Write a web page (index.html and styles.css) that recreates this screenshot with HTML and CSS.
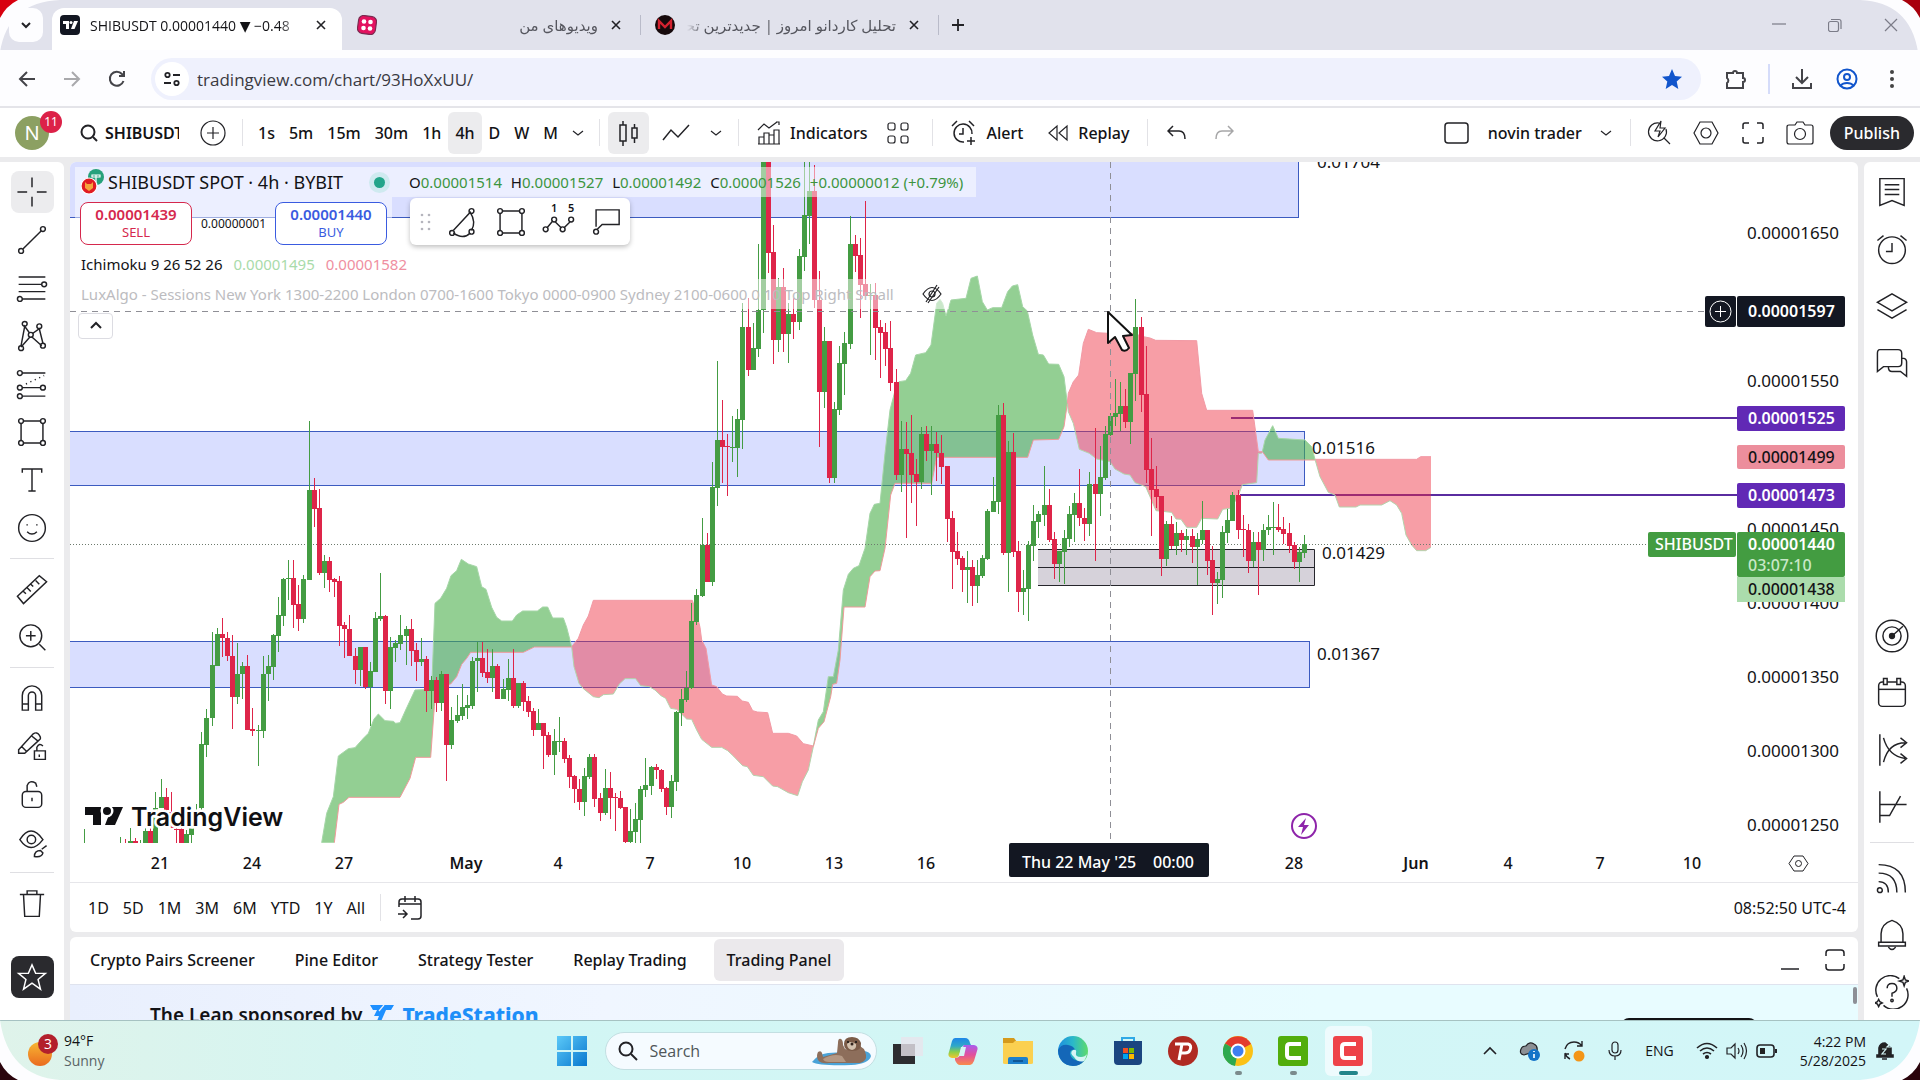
FILE: index.html
```html
<!DOCTYPE html>
<html lang="en">
<head>
  <meta charset="UTF-8">
  <meta name="viewport" content="width=device-width, initial-scale=1.0">
  <title>SHIBUSDT 0.00001440</title>
  <link rel="stylesheet" href="styles.css">
</head>
<body>
  <!-- Browser tabs -->
  <header class="tabstrip">
    <button class="tab-search" aria-label="Search tabs"><svg width="12" height="12" viewBox="0 0 12 12"><path d="M2 4l4 4 4-4" stroke-width="2"/></svg></button>
    <div class="tab tab-active">
      <svg class="favicon" width="20" height="20" viewBox="0 0 20 20"><rect width="20" height="20" rx="4" fill="#131722" stroke="none"/><path d="M3 6h6v8H6V9H3z" fill="#fff" stroke="none"/><circle cx="11" cy="7.500" r="1.500" fill="#fff" stroke="none"/><path d="M14 6h4l-3.500 8H11z" fill="#fff" stroke="none"/></svg>
      <span class="tab-title">SHIBUSDT 0.00001440 ▼ −0.48</span>
      <button class="tab-close" aria-label="Close tab"><svg width="12" height="12" viewBox="0 0 12 12"><path d="M2 2l8 8M10 2l-8 8" stroke-width="1.600"/></svg></button>
    </div>
    <div class="tab">
      <svg class="favicon" width="20" height="20" viewBox="0 0 20 20"><rect x="1" y="1" width="18" height="18" rx="5" fill="#e3125f" stroke="#7a2a50" transform="rotate(8 10 10)"/><g fill="#fff" stroke="none"><circle cx="7" cy="6.500" r="2.300"/><circle cx="13.500" cy="7" r="2.300"/><circle cx="6.500" cy="13" r="2.300"/><circle cx="13" cy="13.500" r="2.300"/></g></svg>
      <span class="tab-title rtl" dir="rtl" lang="fa">ویدیوهای من</span>
      <button class="tab-close" aria-label="Close tab"><svg width="12" height="12" viewBox="0 0 12 12"><path d="M2 2l8 8M10 2l-8 8" stroke-width="1.600"/></svg></button>
    </div>
    <div class="tab tab-line">
      <svg class="favicon" width="20" height="20" viewBox="0 0 20 20"><circle cx="10" cy="10" r="10" fill="#160a0c" stroke="none"/><path d="M4 14V6l6 6 6-6v8" stroke="#d3222f" stroke-width="2.400"/></svg>
      <span class="tab-title rtl" dir="rtl" lang="fa">تحلیل کاردانو امروز | جدیدترین تحلیل</span>
      <button class="tab-close" aria-label="Close tab"><svg width="12" height="12" viewBox="0 0 12 12"><path d="M2 2l8 8M10 2l-8 8" stroke-width="1.600"/></svg></button>
    </div>
    <button class="tab-new tab-line" aria-label="New tab"><svg width="16" height="16" viewBox="0 0 16 16"><path d="M8 2v12M2 8h12" stroke-width="1.800"/></svg></button>
    <div class="window-buttons">
      <button aria-label="Minimize"><svg width="14" height="14" viewBox="0 0 14 14"><path d="M0 6h14"/></svg></button>
      <button aria-label="Restore"><svg width="14" height="14" viewBox="0 0 14 14"><rect x=".500" y="3.500" width="10" height="10" rx="2"/><path d="M3 1.500h8a2 2 0 0 1 2 2V11"/></svg></button>
      <button aria-label="Close window"><svg width="14" height="14" viewBox="0 0 14 14"><path d="M1 1l12 12M13 1L1 13"/></svg></button>
    </div>
  </header>

  <div class="addressbar">
    <button class="nav-btn" aria-label="Back"><svg width="18" height="18" viewBox="0 0 18 18"><path d="M17 9H2M9 2L2 9l7 7" stroke-width="2"/></svg></button>
    <button class="nav-btn nav-off" aria-label="Forward"><svg width="18" height="18" viewBox="0 0 18 18"><path d="M1 9h15M9 2l7 7-7 7" stroke-width="2"/></svg></button>
    <button class="nav-btn" aria-label="Reload"><svg width="18" height="18" viewBox="0 0 18 18"><path d="M15.500 11A7 7 0 1 1 14 4l2 2M16 1v5h-5" stroke-width="2"/></svg></button>
    <div class="urlbox">
      <span class="site-info"><svg width="18" height="18" viewBox="0 0 18 18"><circle cx="4.500" cy="5" r="2.200" stroke-width="1.800"/><path d="M10 5h7M1 13h7" stroke-width="1.800"/><circle cx="13.500" cy="13" r="2.200" stroke-width="1.800"/></svg></span>
      <input type="text" aria-label="Address" value="tradingview.com/chart/93HoXxUU/">
      <svg width="22" height="22" viewBox="0 0 22 22"><path d="M11 1l3 7 7 .700-5.300 4.800L17.300 21 11 17l-6.300 4 1.600-7.500L1 8.700 8 8z" fill="#1155cc" stroke="none"/></svg>
    </div>
    <div class="browser-tools">
      <button aria-label="Extensions"><svg width="22" height="22" viewBox="0 0 22 22"><path d="M2 5h6a2 2 0 0 1 4 0h6v5a2 2 0 0 1 0 4v6H2v-5a3 3 0 0 0 0-5z" stroke-width="2"/></svg></button>
      <i class="tool-line"></i>
      <button aria-label="Downloads"><svg width="22" height="22" viewBox="0 0 22 22"><path d="M11 1v13M5 9l6 6 6-6M2 15v5h18v-5" stroke-width="2"/></svg></button>
      <button class="profile" aria-label="Profile"><svg width="22" height="22" viewBox="0 0 22 22"><circle cx="11" cy="11" r="9.500" stroke-width="2"/><circle cx="11" cy="9" r="3" stroke-width="2"/><path d="M4.500 17.500c3-3.500 10-3.500 13 0" stroke-width="2"/></svg></button>
      <button aria-label="Menu"><svg width="22" height="22" viewBox="0 0 22 22"><g fill="#444" stroke="none"><circle cx="11" cy="4" r="2"/><circle cx="11" cy="11" r="2"/><circle cx="11" cy="18" r="2"/></g></svg></button>
    </div>
  </div>

  <!-- Chart header -->
  <div class="topbar">
    <button class="avatar" aria-label="Account">N<span class="badge">11</span></button>
    <button class="symbol"><svg width="18" height="18" viewBox="0 0 18 18"><circle cx="8" cy="8" r="6.500" stroke-width="2"/><path d="M13 13l4 4" stroke-width="2"/></svg><b>SHIBUSDT</b></button>
    <button class="icon-btn" aria-label="Compare"><svg width="26" height="26" viewBox="0 0 26 26"><circle cx="13" cy="13" r="12"/><path d="M13 7v12M7 13h12"/></svg></button>
    <i class="sep"></i>
    <div class="intervals">
      <button>1s</button><button>5m</button><button>15m</button><button>30m</button><button>1h</button><button class="on">4h</button><button>D</button><button>W</button><button>M</button>
      <button aria-label="More intervals"><svg width="12" height="12" viewBox="0 0 12 12"><path d="M1 4l5 4 5-4"/></svg></button>
    </div>
    <i class="sep"></i>
    <button class="icon-btn on" aria-label="Candles"><svg width="26" height="28" viewBox="0 0 26 28"><path d="M4 6h6v16H4zM7 2v4M7 22v5M16 9h5v10h-5zM18.500 5v4M18.500 19v5" stroke-width="1.500"/></svg></button>
    <button class="icon-btn" aria-label="Line"><svg width="28" height="20" viewBox="0 0 28 20"><path d="M1 17L9 7l7 7L27 2" stroke-width="1.500"/></svg></button>
    <button class="chev" aria-label="Chart types"><svg width="12" height="12" viewBox="0 0 12 12"><path d="M1 4l5 4 5-4"/></svg></button>
    <i class="sep"></i>
    <button class="text-btn"><svg width="24" height="24" viewBox="0 0 24 24"><path d="M1 9l6-6 5 4 8-6M19 1h3v3M2 23v-7h5v7M7 23V12h5v11M12 23v-9h5v9M17 23V9h5v14M1 23h22"/></svg>Indicators</button>
    <button class="icon-btn" aria-label="Templates"><svg width="22" height="22" viewBox="0 0 22 22"><rect x="1" y="1" width="7" height="7" rx="2"/><rect x="14" y="1" width="7" height="7" rx="2"/><rect x="1" y="14" width="7" height="7" rx="2"/><rect x="14" y="14" width="7" height="7" rx="2"/></svg></button>
    <i class="sep"></i>
    <button class="text-btn"><svg width="26" height="26" viewBox="0 0 26 26"><path d="M21 14a9 9 0 1 0-8 8M12 8v6H8M1 6l5-5M18 1l5 5M20 17v8M16 21h8" stroke-width="1.500"/></svg>Alert</button>
    <button class="text-btn"><svg width="22" height="20" viewBox="0 0 22 20"><path d="M10 3v14l-8-7zM20 3v14l-8-7z"/></svg>Replay</button>
    <i class="sep"></i>
    <button class="icon-btn" aria-label="Undo"><svg width="20" height="18" viewBox="0 0 20 18"><path d="M6 2L1 7l5 5M1 7h11q6 0 6 8" stroke-width="1.500"/></svg></button>
    <button class="icon-btn off" aria-label="Redo"><svg width="20" height="18" viewBox="0 0 20 18"><path d="M14 2l5 5-5 5M19 7H8Q2 7 2 15" stroke-width="1.500"/></svg></button>
    <span class="grow"></span>
    <button class="text-btn layout-btn"><svg width="26" height="24" viewBox="0 0 26 24"><rect x="1" y="2" width="23" height="20" rx="3" stroke-width="1.500"/></svg>novin trader<svg width="12" height="12" viewBox="0 0 12 12"><path d="M1 4l5 4 5-4"/></svg></button>
    <i class="sep"></i>
    <button class="icon-btn" aria-label="Quick search"><svg width="26" height="26" viewBox="0 0 26 26"><path d="M13 3a9 9 0 1 0 7 6M18 18l6 6M15 1l-6 10h5l-2 6 7-9h-5z"/></svg></button>
    <button class="icon-btn" aria-label="Settings"><svg width="26" height="26" viewBox="0 0 26 26"><path d="M7 2h12l6 11-6 11H7L1 13z"/><circle cx="13" cy="13" r="5"/></svg></button>
    <button class="icon-btn" aria-label="Fullscreen"><svg width="26" height="26" viewBox="0 0 26 26"><path d="M3 9V5q0-2 2-2h4M17 3h4q2 0 2 2v4M23 17v4q0 2-2 2h-4M9 23H5q-2 0-2-2v-4" stroke-width="1.500"/></svg></button>
    <button class="icon-btn" aria-label="Snapshot"><svg width="28" height="26" viewBox="0 0 28 26"><path d="M3 5h6l2-3h6l2 3h6q2 0 2 2v15q0 2-2 2H3q-2 0-2-2V7q0-2 2-2z"/><circle cx="14" cy="14" r="5.500"/></svg></button>
    <button class="publish">Publish</button>
  </div>

  <div class="workspace">
    <!-- Drawing tools -->
    <nav class="toolbar-left">
      <button class="on" aria-label="Cross"><svg viewBox="0 0 28 28"><path d="M14 2v8M14 18v8M2 14h8M18 14h8"/></svg></button>
      <button aria-label="Trend line"><svg viewBox="0 0 28 28"><path d="M6.500 21.500l15-15"/><circle cx="5" cy="23" r="2"/><circle cx="23" cy="5" r="2"/></svg></button>
      <button aria-label="Fib"><svg viewBox="0 0 28 28"><path d="M3 5h22M3 11h19M3 17h22M6 23h19"/><circle cx="24" cy="11" r="2"/><circle cx="4" cy="23" r="2"/></svg></button>
      <button aria-label="Patterns"><svg viewBox="0 0 28 28"><path d="M5 22L8 6l5 7 7-5 3 12M5 23l8-9 9 8"/><circle cx="5" cy="24" r="2"/><circle cx="8" cy="4" r="2"/><circle cx="13" cy="13" r="2" fill="#fff"/><circle cx="20" cy="6" r="2"/><circle cx="23" cy="22" r="2"/></svg></button>
      <button aria-label="Forecasting"><svg viewBox="0 0 28 28"><path d="M6 5h19M6 17h15M6 24h19"/><path d="M9 14L24 7" stroke-dasharray="1 3"/><circle cx="4" cy="5" r="2"/><circle cx="4" cy="17" r="2"/><circle cx="4" cy="24" r="2"/><circle cx="23" cy="17" r="2"/></svg></button>
      <button aria-label="Shapes"><svg viewBox="0 0 28 28"><path d="M7 5h14M7 23h14M5 7v14M23 7v14"/><circle cx="5" cy="5" r="2"/><circle cx="23" cy="5" r="2"/><circle cx="5" cy="23" r="2"/><circle cx="23" cy="23" r="2"/></svg></button>
      <button aria-label="Text"><svg viewBox="0 0 28 28"><path d="M6 8V5h16v3M14 5v18M11 23h6"/></svg></button>
      <button aria-label="Icons"><svg viewBox="0 0 28 28"><circle cx="14" cy="14" r="11"/><path d="M10 17q4 4 8 0M10 11v1M18 11v1"/></svg></button>
      <hr>
      <button aria-label="Measure"><svg viewBox="0 0 28 28"><path d="M2 20L20 3l6 5L7 26zM7 16l2 2M10 13l3 3M13 10l2 2M17 7l3 3"/></svg></button>
      <button aria-label="Zoom in"><svg viewBox="0 0 28 28"><circle cx="13" cy="13" r="9"/><path d="M20 20l5 5M13 9v8M9 13h8"/></svg></button>
      <hr>
      <button aria-label="Magnet"><svg viewBox="0 0 28 28"><path d="M6 24V12a8 8 0 0 1 16 0v12h-5V12a3 3 0 0 0-6 0v12zM6 19h5M17 19h5"/></svg></button>
      <button aria-label="Stay in drawing mode"><svg viewBox="0 0 28 28"><path d="M3 17L15 4q3-2 5 1t0 4L8 20H3zM5 14l5 5M14 6l5 4M16 18h9v7h-9zM18 18v-3q2-4 5-1M20 21v2"/></svg></button>
      <button aria-label="Lock"><svg viewBox="0 0 28 28"><rect x="6" y="12" width="16" height="13" rx="3"/><path d="M10 12V7q2-5 7-2l1 3M14 17v3"/></svg></button>
      <button aria-label="Hide"><svg viewBox="0 0 28 28"><path d="M4 12q9-14 19 0-10 13-19 0z"/><circle cx="13.500" cy="12" r="3.500"/><path d="M16 26q0-5 5-5l2 2q-1 4-7 3zM22 20l4-3"/></svg></button>
      <hr>
      <button aria-label="Remove"><svg viewBox="0 0 28 28"><path d="M4 7h20M10 7V4h8v3M7 7l1 18h12l1-18"/></svg></button>
      <button class="fav" aria-label="Favorites"><svg viewBox="0 0 28 28"><path d="M14 4l3 7h8l-6 5 2 8-7-5-7 5 2-8-6-5h8z"/></svg></button>
    </nav>

    <main class="center">
      <section class="chart-card">
        <div class="chart-body">
          <div class="pane">
            <svg class="plot" width="100%" height="100%">
              <g transform="translate(-70 -162)">
                <g class="band">
                  <rect x="60" y="150" width="1238" height="67"/>
                  <rect x="60" y="431" width="1244" height="54"/>
                  <rect x="60" y="641" width="1249" height="46"/>
                </g>
                <rect class="fill" x="1038" y="549" width="276" height="36" fill="#d6d2da"/>
                <path d="M1038 549.500h276.500v36H1038M1038 567.500h276" stroke="#26262c"/>
                <path d="M1231 418h506M1240 495h497" stroke="#5a2ca0" stroke-width="2"/>
                <g id="clouds"></g>
                <path d="M70 544.500h1578" stroke="#6d7a6d" stroke-dasharray="1 2"/>
                <g id="candles" shape-rendering="crispEdges"></g>
                <g class="note"><text x="1317" y="168">0.01704</text><text x="1312" y="454">0.01516</text><text x="1322" y="559">0.01429</text><text x="1317" y="660">0.01367</text></g>
                <path d="M70 311.500h1635M1110.500 162v681" stroke="#8f8f96" stroke-dasharray="6 5"/>
                <circle cx="1304" cy="826" r="12" fill="#fff" stroke="#8e24aa" stroke-width="2"/>
                <path d="M1306 818l-8 9h5l-2 8 8-10h-5z" fill="#8e24aa" stroke="none"/>
                <g class="brand"><path d="M85 807h16v18h-8v-10h-8zM112 807h11l-8 18h-10z"/><circle cx="107" cy="811" r="4"/><text x="131" y="826">TradingView</text></g>
                <rect class="fill" x="1705" y="296" width="31" height="31" rx="2" fill="#131722"/>
                <path d="M1720.500 306v11M1715 311.500h11" stroke="#fff"/><circle cx="1720.500" cy="311.500" r="10.500" stroke="#fff"/>
                <rect class="fill" x="1648" y="532" width="88" height="25" rx="2" fill="#439c41"/>
                <text class="tag" x="1655" y="550">SHIBUSDT</text>
                <path d="M1108 312v31l7-6 7 13q4 2 7-2l-6-12 9-1z" fill="#fff" stroke="#111" stroke-width="2" stroke-linejoin="round"/>
              </g>
            </svg>

            <div class="legend">
              <div class="legend-main">
                <div class="legend-title"><svg width="24" height="28" viewBox="0 0 24 28"><circle cx="15" cy="9" r="8" fill="#26a17b" stroke="none"/><path d="M11 7h8v2h-8zM15 7v7" stroke="#fff"/><circle cx="8" cy="18" r="8" fill="#e11b22" stroke="#fff"/><path d="M4 14l2 2h4l2-2v6l-4 3-4-3z" fill="#f6a43a" stroke="none"/></svg>SHIBUSDT SPOT · 4h · BYBIT<i class="live"></i></div>
                <div class="ohlc">O<em>0.00001514</em> H<em>0.00001527</em> L<em>0.00001492</em> C<em>0.00001526</em> <em>+0.00000012 (+0.79%)</em></div>
              </div>
              <div class="orders">
                <button class="order sell"><b>0.00001439</b>SELL</button>
                <span class="spread">0.00000001</span>
                <button class="order buy"><b>0.00001440</b>BUY</button>
              </div>
              <div class="indicator">Ichimoku 9 26 52 26 <span class="up">0.00001495</span><span class="down">0.00001582</span></div>
              <div class="indicator muted">LuxAlgo - Sessions New York 1300-2200 London 0700-1600 Tokyo 0000-0900 Sydney 2100-0600 0 10 Top Right Small<svg width="22" height="20" viewBox="0 0 22 20"><path d="M2 10q9-13 18 0-9 13-18 0zM16 1L5 18M18 3L7 19"/><circle cx="11" cy="10" r="3"/></svg></div>
              <button class="collapse" aria-label="Collapse legend"><svg width="12" height="12" viewBox="0 0 12 12"><path d="M1 8l5-5 5 5" stroke-width="2"/></svg></button>
            </div>

            <div class="float-tools">
              <svg width="12" height="20" viewBox="0 0 12 20"><g fill="#b5b5bd" stroke="none"><circle cx="2" cy="3" r="1.300"/><circle cx="2" cy="10" r="1.300"/><circle cx="2" cy="17" r="1.300"/><circle cx="9" cy="3" r="1.300"/><circle cx="9" cy="10" r="1.300"/><circle cx="9" cy="17" r="1.300"/></g></svg>
              <button aria-label="Arc"><svg viewBox="0 0 28 28"><path d="M6 21L20 6q5 8 1 15M6 23q8 6 14 0"/><circle cx="5" cy="23" r="2"/><circle cx="21" cy="5" r="2"/><circle cx="21" cy="22" r="2"/></svg></button>
              <button aria-label="Rectangle"><svg viewBox="0 0 28 28"><path d="M7 5h14M7 23h14M5 7v14M23 7v14"/><circle cx="5" cy="5" r="2"/><circle cx="23" cy="5" r="2"/><circle cx="5" cy="23" r="2"/><circle cx="23" cy="23" r="2"/></svg></button>
              <button aria-label="Elliott wave"><svg viewBox="0 0 28 28"><path d="M4 19l5-6M11 14l5 5M18 19l5-5"/><circle cx="3" cy="20" r="2"/><circle cx="10" cy="12" r="2"/><circle cx="17" cy="20" r="2"/><circle cx="24" cy="12" r="2"/><text x="10" y="6">1</text><text x="24" y="6">5</text></svg></button>
              <button aria-label="Callout"><svg viewBox="0 0 28 28"><path d="M6 20l4-4h14V4H5v14"/><circle cx="5" cy="22" r="2"/></svg></button>
            </div>
          </div>

          <div class="price-axis">
            <svg width="100%" height="100%">
              <g transform="translate(-1737 -162)">
                <g class="scale">
                  <text x="1747" y="239">0.00001650</text><text x="1747" y="387">0.00001550</text>
                  <text x="1747" y="535">0.00001450</text><text x="1747" y="609">0.00001400</text>
                  <text x="1747" y="683">0.00001350</text><text x="1747" y="757">0.00001300</text>
                  <text x="1747" y="831">0.00001250</text>
                </g>
                <rect class="fill" x="1737" y="296" width="108" height="31" rx="2" fill="#131722"/>
                <rect class="fill" x="1737" y="406" width="108" height="25" rx="2" fill="#6129b5"/>
                <rect class="fill" x="1737" y="445" width="108" height="24" rx="2" fill="#ec8e9c"/>
                <rect class="fill" x="1737" y="483" width="108" height="25" rx="2" fill="#6129b5"/>
                <rect class="fill" x="1737" y="532" width="108" height="45" rx="2" fill="#439c41"/>
                <rect class="fill" x="1737" y="577" width="108" height="25" fill="#abdcac"/>
                <g class="marks">
                  <text x="1748" y="317">0.00001597</text><text x="1748" y="424">0.00001525</text>
                  <text class="dark" x="1748" y="463">0.00001499</text><text x="1748" y="501">0.00001473</text>
                  <text x="1748" y="550">0.00001440</text><text class="pale" x="1748" y="571">03:07:10</text>
                  <text class="dark" x="1748" y="595">0.00001438</text>
                </g>
              </g>
            </svg>
          </div>
        </div>

        <div class="time-axis">
          <svg width="100%" height="39">
            <g transform="translate(-70 -843)">
              <g class="dates">
                <text x="160" y="869">21</text><text x="252" y="869">24</text><text x="344" y="869">27</text><text class="month" x="466" y="869">May</text>
                <text x="558" y="869">4</text><text x="650" y="869">7</text><text x="742" y="869">10</text><text x="834" y="869">13</text><text x="926" y="869">16</text>
                <text x="1294" y="869">28</text><text class="month" x="1416" y="869">Jun</text><text x="1508" y="869">4</text><text x="1600" y="869">7</text><text x="1692" y="869">10</text>
              </g>
              <rect class="fill" x="1009" y="843" width="200" height="34" rx="2" fill="#131722"/>
              <text class="stamp" x="1022" y="868">Thu 22 May '25</text><text class="stamp" x="1153" y="868">00:00</text>
              <path d="M1794 856h9l5 7.500-5 7.500h-9l-5-7.500z"/><circle cx="1798.500" cy="863.500" r="3"/>
            </g>
          </svg>
        </div>

        <div class="ranges">
          <button>1D</button><button>5D</button><button>1M</button><button>3M</button><button>6M</button><button>YTD</button><button>1Y</button><button>All</button>
          <i class="sep"></i>
          <button class="goto" aria-label="Go to date"><svg width="26" height="26" viewBox="0 0 26 26"><path d="M2 12V7q0-3 3-3h16q3 0 3 3v14q0 3-3 3h-7M2 9h22M8 1v6M18 1v6M1 19h9M6 15l4 4-4 4" stroke-width="1.500"/></svg></button>
          <span class="grow"></span>
          <button>08:52:50 UTC-4</button>
        </div>
      </section>

      <section class="panel-card">
        <div class="panel-tabs">
          <button>Crypto Pairs Screener</button><button>Pine Editor</button><button>Strategy Tester</button><button>Replay Trading</button><button class="on">Trading Panel</button>
          <span class="grow"></span>
          <button class="plain" aria-label="Minimize panel"><svg width="20" height="26" viewBox="0 0 20 26"><path d="M1 22h18" stroke-width="1.500"/></svg></button>
          <button class="plain" aria-label="Maximize panel"><svg width="22" height="26" viewBox="0 0 22 26"><path d="M2 9V6q0-3 3-3h12q3 0 3 3v3M2 17v3q0 3 3 3h12q3 0 3-3v-3" stroke-width="1.500"/></svg></button>
        </div>
        <div class="banner">
          <span>The Leap sponsored by</span>
          <svg width="24" height="22" viewBox="0 0 24 22"><path d="M0 1h24l-3 5h-5l-7 16H5l4-10H4l3-6H3z" fill="#1e90ff" stroke="none"/><path d="M9 7l5-6M16 12l-4 10" stroke="#e9effc"/></svg>
          <b>TradeStation</b>
          <button class="banner-btn" aria-label="Join"></button>
          <i class="scroll-thumb"></i>
        </div>
      </section>
    </main>

    <nav class="toolbar-right">
      <button aria-label="Watchlist"><svg viewBox="0 0 28 28"><path d="M4 3h20v22l-10-4-10 4zM8 8h12M8 12h12M8 16h12"/></svg></button>
      <button aria-label="Alerts"><svg viewBox="0 0 28 28"><circle cx="14" cy="15" r="11"/><path d="M14 9v7H9M2 7l5-4M21 3l5 4"/></svg></button>
      <button aria-label="Object tree"><svg viewBox="0 0 28 28"><path d="M14 4l12 7-12 7-12-7zM2 17l12 7 12-7"/></svg></button>
      <button aria-label="Chats"><svg viewBox="0 0 28 28"><path d="M4 3h15q3 0 3 3v8q0 3-3 3H7l-5 4V6q0-3 2-3zM22 10q4 0 4 3v12l-5-4h-7q-3 0-3-4"/></svg></button>
      <span class="grow"></span>
      <button aria-label="Screener"><svg viewBox="0 0 28 28"><circle cx="14" cy="14" r="13"/><circle cx="14" cy="14" r="7.500"/><path d="M14 14l9-8"/><circle cx="14" cy="14" r="2" fill="#222"/></svg></button>
      <button aria-label="Calendar"><svg viewBox="0 0 28 28"><rect x="3" y="5" width="22" height="20" rx="3"/><path d="M3 11h22"/><path d="M7 2h3v5H7zM18 2h3v5h-3z" fill="#fff"/></svg></button>
      <button aria-label="Options"><svg viewBox="0 0 28 28"><path d="M4 1v26M7 4q4 15 18 17M7 24Q11 8 25 8M21 4l5 4-5 4M21 17l5 4-5 4"/></svg></button>
      <button aria-label="Yield curves"><svg viewBox="0 0 28 28"><path d="M4 1v26M4 12h22M4 21h8L21 5"/></svg></button>
      <hr>
      <button aria-label="News"><svg viewBox="0 0 28 28"><circle cx="4" cy="24" r="2"/><path d="M3 17q8 0 8 9M3 10q15 0 15 16M3 3q22 0 22 23"/></svg></button>
      <button aria-label="Notifications"><svg viewBox="0 0 28 28"><path d="M5 20V13q0-8 9-11 9 3 9 11v7M3 20h22v3H3zM11 24q3 4 6 0"/></svg></button>
      <button aria-label="Help"><svg viewBox="0 0 28 28"><path d="M20 3A12 12 0 0 0 2 18M7 25A12 12 0 0 0 26 11M10 11q0-4 4-4t4 4q0 3-4 4v3M24 1l1 3 3 1-3 1-1 3-1-3-3-1 3-1zM3 20l1 2 2 1-2 1-1 2-1-2-2-1 2-1z"/><circle cx="14" cy="21" r="1"/></svg></button>
    </nav>
  </div>

  <!-- Windows taskbar -->
  <footer class="taskbar">
    <div class="weather">
      <svg width="30" height="34" viewBox="0 0 30 34"><defs><linearGradient id="sun" x2="0" y2="1"><stop stop-color="#f7b733"/><stop offset="1" stop-color="#ea6a1f"/></linearGradient></defs><circle cx="12" cy="20" r="12" fill="url(#sun)" stroke="none"/><circle cx="20" cy="10" r="10" fill="#b3202c" stroke="none"/><text x="20" y="15">3</text></svg>
      <div>94°F<span>Sunny</span></div>
    </div>
    <div class="apps">
      <button aria-label="Start"><svg width="30" height="30" viewBox="0 0 30 30"><defs><linearGradient id="win" gradientUnits="userSpaceOnUse" x1="0" y1="0" x2="30" y2="30"><stop stop-color="#5cc9f8"/><stop offset="1" stop-color="#0878cf"/></linearGradient></defs><path d="M0 0h14v14H0zM16 0h14v14H16zM0 16h14v14H0zM16 16h14v14H16z" fill="url(#win)" stroke="none"/></svg></button>
      <label class="task-search"><svg width="20" height="20" viewBox="0 0 20 20"><circle cx="8" cy="8" r="6.500" stroke-width="2"/><path d="M13 13l6 6" stroke-width="2"/></svg><input type="text" placeholder="Search" aria-label="Search">
        <svg width="62" height="32" viewBox="0 0 62 32"><g stroke="none"><path d="M1 27q6-8 16-9l34-2q8 0 9 5-2 8-20 9-32 1-39-3z" fill="#4aa3d8"/><path d="M7 17q3-2 4 1l1 4 14-4 1-10q0-5 3-4 2 1 2 6l2 4q4 1 4-2l8-2q8 2 9 10 1 6-6 8H18q-8 1-11-3-2-4 0-8z" fill="#8d6e5b"/><path d="M12 24q10-6 19-3l4 6H18q-5 0-6-3z" fill="#b39884"/><path d="M33 9q0-7 8-7 7 0 9 6 1 8-9 8-8 0-8-7z" fill="#7b5b48"/><path d="M36 9q3-4 9 0 1 5-4 6-5-1-5-6z" fill="#d3c1ae"/><circle cx="37" cy="7" r="1" fill="#111"/><circle cx="45" cy="7" r="1" fill="#111"/><circle cx="41" cy="9" r="1.500" fill="#32231c"/></g></svg></label>
      <button aria-label="Task view"><svg width="30" height="30" viewBox="0 0 30 30"><path d="M0 8h22v20H0z" fill="#2d2d30" stroke="none"/><path d="M8 1h22v19H8z" fill="#e8e5ec" fill-opacity=".8" stroke="none"/></svg></button>
      <button aria-label="Copilot"><svg width="30" height="30" viewBox="0 0 30 30"><defs><linearGradient id="copa" x2="0" y2="1"><stop stop-color="#1e86e8"/><stop offset=".4" stop-color="#2fa8c8"/><stop offset=".7" stop-color="#8ccf4a"/><stop offset="1" stop-color="#f5c52f"/></linearGradient><linearGradient id="copb" x2="0" y2="1"><stop stop-color="#a75df0"/><stop offset=".5" stop-color="#e2509c"/><stop offset="1" stop-color="#f98b4a"/></linearGradient></defs><path d="M7 2h10q4 0 5 5l1 2h-5q-4 0-5 4l-2 6q-1 3-4 3H4q-5-1-3-6L4 5q1-3 3-3z" fill="url(#copa)" stroke="none"/><path d="M23 9h3q5 1 3 6l-3 10q-1 3-4 4H12q-3 0-5-5v-2q4 0 5-3l3-8q1-3 2-2h-4z" fill="url(#copb)" stroke="none"/><path d="M13 11h5l-2 9h-5z" fill="#d5f5f6" stroke="none"/></svg></button>
      <button aria-label="Explorer"><svg width="30" height="30" viewBox="0 0 30 30"><path d="M0 2h11l3 4h16v20H0z" fill="#d59a1c" stroke="none"/><path d="M0 5h30v22q0 1-2 1H2q-2 0-2-1z" fill="#fbd050" stroke="none"/><path d="M0 2h10l2 3-2 2H0z" fill="#d59a1c" stroke="none"/><path d="M5 28v-5q0-2 2-2h16q2 0 2 2v5z" fill="#1d80cc" stroke="none"/><path d="M10 25h10" stroke="#0f5796" stroke-width="2"/></svg></button>
      <button aria-label="Edge"><svg width="30" height="30" viewBox="0 0 30 30"><defs><linearGradient id="edg" x2="1" y2="0"><stop stop-color="#1d8fe0"/><stop offset=".5" stop-color="#2bb8c9"/><stop offset="1" stop-color="#5edb6b"/></linearGradient></defs><circle cx="15" cy="15" r="15" fill="url(#edg)" stroke="none"/><path d="M0 14q3-6 10-5 6 1 7 5-5-1-5 4 2 8 14 7-4 5-11 5Q1 29 0 14z" fill="#1467b8" stroke="none"/><path d="M16 21q-5-4-1-7 4-1 3 3-1 4 5 4 4 0 6-3-1 4-3 7-6 2-10-4z" fill="#d5f5f6" stroke="none"/></svg></button>
      <button aria-label="Store"><svg width="28" height="30" viewBox="0 0 28 30"><path d="M8 7V2h12v5" stroke="#2fa9e6" stroke-width="2"/><path d="M0 5h28v20q0 4-4 4H4q-4 0-4-4z" fill="#1b4580" stroke="none"/><g stroke="none"><path d="M9 12h5v5H9z" fill="#f25022"/><path d="M15 12h5v5h-5z" fill="#7fba00"/><path d="M9 18h5v5H9z" fill="#00a4ef"/><path d="M15 18h5v5h-5z" fill="#ffb900"/></g></svg></button>
      <button aria-label="Player"><svg width="30" height="30" viewBox="0 0 30 30"><circle cx="15" cy="15" r="15" fill="#b02a22" stroke="none"/><path d="M7 8h13q4 1 2 6-1 3-5 3h-6M14 8l-3 16" stroke="#fff" stroke-width="3"/></svg></button>
      <button class="running" aria-label="Chrome"><svg width="30" height="30" viewBox="0 0 30 30"><g stroke="none"><circle cx="15" cy="15" r="15" fill="#fbc116"/><path d="M15 15L2 7.500A15 15 0 0 1 28 8z" fill="#e33b2e"/><path d="M15 15l-3 15A15 15 0 0 1 2 7.500z" fill="#2da94f"/><circle cx="15" cy="15" r="7.500" fill="#fff"/><circle cx="15" cy="15" r="5.500" fill="#3f7ff0"/></g></svg></button>
      <button class="running" aria-label="Camtasia"><svg width="30" height="30" viewBox="0 0 30 30"><rect width="30" height="30" rx="3" fill="#52ad0c" stroke="none"/><path d="M23 8H12q-3 0-3 3v8q0 3 3 3h11" stroke="#fff" stroke-width="4"/></svg></button>
      <button class="running current" aria-label="Recorder"><svg width="30" height="30" viewBox="0 0 30 30"><rect width="30" height="30" rx="3" fill="#ee4349" stroke="none"/><path d="M23 8H12q-3 0-3 3v8q0 3 3 3h11" stroke="#fff" stroke-width="4"/></svg></button>
    </div>
    <div class="tray">
      <svg width="14" height="14" viewBox="0 0 14 14"><path d="M1 10l6-6 6 6" stroke-width="1.600"/></svg>
      <svg width="22" height="22" viewBox="0 0 22 22"><path d="M5 15q-5-1-3-6 1-3 5-3 3-5 8-2 4 2 3 7z" fill="#8b8f94"/><circle cx="15" cy="15" r="6" fill="#1373c8" stroke="none"/><path d="M15 14v4M15 11v1" stroke="#fff" stroke-width="1.600"/></svg>
      <svg width="22" height="22" viewBox="0 0 22 22"><path d="M2 9q2-7 9-7 5 0 8 4M19 1v5h-5M2 13q1 4 5 6M2 19v-5h4" stroke-width="1.400"/><circle cx="16" cy="16" r="5.500" fill="#f39518" stroke="none"/></svg>
      <svg width="16" height="20" viewBox="0 0 16 20"><rect x="5" y="1" width="6" height="11" rx="3"/><path d="M2 9q0 6 6 6t6-6M8 15v4"/></svg>
      <span class="lang">ENG</span>
      <div class="net">
        <svg width="22" height="20" viewBox="0 0 22 20"><path d="M1 7q10-9 20 0M4 10q7-6 14 0M7 13q4-3 8 0" stroke-width="1.600"/><circle cx="11" cy="16" r="1.500" fill="#222"/></svg>
        <svg width="22" height="20" viewBox="0 0 22 20"><path d="M1 7h4l4-4v14l-4-4H1zM12 7q2 3 0 6M15 4q4 6 0 12M18 2q5 8 0 16"/></svg>
        <svg width="22" height="20" viewBox="0 0 22 20"><rect x="1" y="4" width="17" height="12" rx="3" stroke-width="1.600"/><rect x="4" y="7" width="5" height="6" fill="#222" stroke="none"/><path d="M20 8v4" stroke-width="2"/></svg>
      </div>
      <div class="clock">4:22 PM<span>5/28/2025</span></div>
      <svg width="18" height="20" viewBox="0 0 18 20"><path d="M1 14h2V7q1-5 6-5l6 5v7h2v2H1zM6 18h5" fill="#222" stroke-width="1.600"/><path d="M6 8h4l-4 5h4M11 2h4l-4 4h4" stroke="#d5f5f6"/></svg>
    </div>
  </footer>

  <!-- Rounded screen corners -->
  <svg class="corner tl" width="60" height="60" viewBox="0 0 60 60"><path d="M0 0h60Q8 2 0 52z" fill="#fdfdff"/><path d="M0 0h18Q6 6 0 18z" fill="#d8000f"/></svg>
  <svg class="corner tr" width="60" height="60" viewBox="0 0 60 60"><path d="M60 0H0q50 2 58 52l2 8z" fill="#fdfdff"/><path d="M60 0H42q12 6 18 18z" fill="#a8000c"/></svg>
  <svg class="corner bl" width="60" height="60" viewBox="0 0 60 60"><path d="M0 60h60Q8 56 0 0z" fill="#fdfdff"/><path d="M0 60h18Q6 54 0 42z" fill="#2a040c"/></svg>
  <svg class="corner br" width="60" height="60" viewBox="0 0 60 60"><path d="M60 60H0Q52 56 60 0z" fill="#fdfdff"/><path d="M60 60H42q12-6 18-18z" fill="#2a040c"/></svg>

  <script src="chart.js"></script>
</body>
</html>
```

FILE: styles.css
```css
* {
  box-sizing: border-box;
}

body {
  margin: 0;
  height: 100vh;
  display: flex;
  flex-direction: column;
  overflow: hidden;
  background-color: #ebebed;
  color: #131316;
  font-family: "Noto Sans", "Open Sans", sans-serif;
  font-size: 16px;
}

button {
  display: inline-flex;
  align-items: center;
  justify-content: center;
  border: 0;
  padding: 0;
  background: none;
  color: inherit;
  font: inherit;
  white-space: nowrap;
}

svg {
  flex: none;
  fill: none;
  stroke: #222226;
  stroke-width: 1.2;
}

svg text {
  fill: #131316;
  stroke: none;
}

.grow {
  flex: 1;
}

/* Browser */
.tabstrip {
  display: flex;
  height: 50px;
  background-color: #e1e2ec;
  font-family: "Open Sans", "DejaVu Sans", sans-serif;
  font-size: 14px;
}

.tab-search {
  z-index: 1;
  width: 34px;
  height: 34px;
  margin: 8px 9px;
  border-radius: 10px;
  background-color: #fdfdff;
}

.tab {
  flex: 0 1 298px;
  min-width: 0;
  display: flex;
  align-items: center;
  gap: 12px;
  padding: 0 18px 0 15px;
}

.tab-active {
  flex-basis: 290px;
  margin-top: 8px;
  padding: 0 15px 8px 8px;
  gap: 10px;
  border-radius: 12px 12px 0 0;
  background-color: #fff;
}

.tab-line {
  background: linear-gradient(#b9bbc9, #b9bbc9) left center / 1px 20px no-repeat;
}

.tab-title {
  flex: 1;
  min-width: 0;
  overflow: hidden;
  white-space: nowrap;
  -webkit-mask-image: linear-gradient(to right, #000 88%, transparent);
  mask-image: linear-gradient(to right, #000 88%, transparent);
}

.rtl {
  color: #55565e;
  font-size: 15px;
  -webkit-mask-image: linear-gradient(to left, #000 92%, transparent);
  mask-image: linear-gradient(to left, #000 92%, transparent);
}

.tab-new {
  width: 40px;
}

.window-buttons {
  display: flex;
  align-items: center;
  gap: 42px;
  margin-left: auto;
  padding-right: 22px;
}

.window-buttons svg {
  stroke: #7b7c88;
}

.addressbar {
  display: flex;
  align-items: center;
  height: 58px;
  padding: 2px 0 0 18px;
  gap: 27px;
  background-color: #fdfdff;
  border-bottom: 2px solid #e4e4e9;
}

.nav-btn svg,
.browser-tools svg {
  stroke: #444449;
}

.nav-off {
  opacity: 0.45;
}

.urlbox {
  flex: 1;
  display: flex;
  align-items: center;
  gap: 8px;
  height: 42px;
  margin-left: -2px;
  padding: 0 18px 0 4px;
  border-radius: 21px;
  background-color: #eff1fd;
}

.site-info {
  display: flex;
  align-items: center;
  justify-content: center;
  width: 34px;
  height: 34px;
  border-radius: 17px;
  background-color: #fff;
}

.urlbox input {
  flex: 1;
  border: 0;
  padding: 0;
  background: none;
  color: #3a3a42;
  font: 17px "Open Sans", sans-serif;
}

.browser-tools {
  display: flex;
  align-items: center;
  gap: 23px;
  margin-left: -3px;
  padding-right: 17px;
}

.tool-line {
  width: 2px;
  height: 30px;
  margin: 0 -2px;
  background-color: #d5dcfa;
}

.browser-tools .profile svg {
  stroke: #1155cc;
}

/* Chart header */
.topbar {
  display: flex;
  align-items: center;
  height: 49px;
  padding: 0 6px 0 15px;
  background-color: #fff;
}

.avatar {
  position: relative;
  width: 34px;
  height: 34px;
  border-radius: 17px;
  background-color: #8ca062;
  color: #fff;
  font-size: 20px;
}

.badge {
  position: absolute;
  top: -5px;
  right: -13px;
  width: 22px;
  height: 22px;
  border-radius: 11px;
  background-color: #dc2148;
  font-size: 12px;
  line-height: 22px;
}

.symbol {
  width: 99px;
  margin: 0 21px 0 31px;
  gap: 7px;
  justify-content: flex-start;
  overflow: hidden;
}

.symbol b {
  font-weight: 600;
  overflow: hidden;
}

.sep {
  width: 1px;
  height: 27px;
  background-color: #e2e2e6;
}

.topbar > .sep {
  margin: 0 8px;
}

.icon-btn {
  width: 41px;
  height: 42px;
  margin-right: 6px;
  border-radius: 6px;
}

.symbol + .icon-btn {
  width: 26px;
  margin-right: 8px;
}

.icon-btn.off {
  opacity: 0.4;
}

.intervals {
  display: flex;
}

.intervals button {
  height: 42px;
  padding: 0 7px;
  border-radius: 6px;
  font-weight: 500;
}

.intervals .on,
.icon-btn.on {
  background-color: #ececee;
}

.chev {
  padding: 0 8px;
}

.text-btn {
  gap: 9px;
  height: 42px;
  padding: 0 10px;
  font-weight: 500;
}

.text-btn + .text-btn {
  padding-left: 14px;
}

.layout-btn {
  gap: 18px;
}

.publish {
  height: 34px;
  margin-left: 3px;
  padding: 0 14px;
  border-radius: 17px;
  background-color: #2a2a2e;
  color: #fff;
  font-weight: 500;
}

/* Workspace */
.workspace {
  flex: 1;
  min-height: 0;
  display: flex;
  gap: 6px;
  padding-top: 5px;
}

.toolbar-left,
.toolbar-right {
  display: flex;
  flex-direction: column;
  align-items: center;
  background-color: #fff;
}

.toolbar-left {
  width: 64px;
  padding-top: 9px;
  gap: 6px;
  border-radius: 0 6px 0 0;
}

.toolbar-left button {
  width: 43px;
  height: 42px;
  flex: none;
  border-radius: 8px;
}

.toolbar-left svg,
.toolbar-right svg,
.float-tools button svg {
  width: 34px;
  height: 34px;
}

.toolbar-left hr,
.toolbar-right hr {
  width: 44px;
  height: 1px;
  flex: none;
  margin: 3px 0;
  border: 0;
  background-color: #dfdfe3;
}

.toolbar-left .on {
  background-color: #ececee;
}

.toolbar-left .fav {
  margin-top: 26px;
  background-color: #2a2a2e;
}

.fav svg {
  stroke: #fff;
}

.toolbar-right {
  width: 56px;
  padding: 8px 0 6px;
  gap: 13px;
  border-radius: 6px 0 0 0;
}

.toolbar-right button {
  width: 44px;
  height: 44px;
}

.toolbar-right hr {
  margin: 0;
}

.center {
  flex: 1;
  min-width: 0;
  display: flex;
  flex-direction: column;
  gap: 5px;
}

.chart-card {
  flex: 1;
  min-height: 0;
  display: flex;
  flex-direction: column;
  border-radius: 6px;
  background-color: #fff;
  overflow: hidden;
}

.chart-body {
  flex: 1;
  min-height: 0;
  display: flex;
}

.pane {
  position: relative;
  flex: 1;
  min-width: 0;
  overflow: hidden;
}

.plot,
.price-axis svg,
.time-axis svg {
  display: block;
  stroke-width: 1;
}

.fill {
  stroke: none;
}

.band rect {
  fill: #d9deff;
  stroke: #3c5bc0;
  transform: translate(0.5px, 0.5px);
}

.note text,
.scale text {
  font-size: 17px;
}

.brand path,
.brand circle,
.brand text {
  fill: #101013;
  stroke: #fff;
  stroke-width: 5;
  paint-order: stroke;
}

.brand text {
  font: 600 25px Inter, sans-serif;
}

.tag,
.marks text,
.stamp {
  fill: #fff;
  font-size: 16px;
  font-weight: 600;
}

.tag,
.stamp {
  font-weight: 500;
}

.marks .dark {
  fill: #131316;
  font-weight: 500;
}

.marks .pale {
  fill: #c9e8c8;
  font-weight: 500;
}

.dates text {
  font-size: 16px;
  font-weight: 500;
  text-anchor: middle;
}

.dates .month {
  font-weight: 600;
}

.price-axis {
  width: 121px;
}

.time-axis {
  height: 39px;
}

/* Legend */
.legend {
  position: absolute;
  top: 5px;
  left: 5px;
  font-size: 15px;
}

.legend-main {
  display: flex;
}

.legend-title,
.ohlc,
.orders,
.indicator {
  display: flex;
  align-items: center;
  background-color: rgba(255, 255, 255, 0.5);
}

.legend-title {
  width: 317px;
  height: 30px;
  padding-left: 6px;
  gap: 3px;
  font-size: 18px;
  line-height: 32px;
  white-space: nowrap;
}

.live {
  width: 11px;
  height: 11px;
  margin-left: 28px;
  border-radius: 50%;
  background-color: #22a58a;
  box-shadow: 0 0 0 5px #cfeaf0;
}

.ohlc {
  display: block;
  height: 30px;
  line-height: 31px;
  padding: 0 8px 0 17px;
  white-space: nowrap;
}

.ohlc em {
  margin-right: 5px;
  color: #3c953f;
  font-style: normal;
}

.orders {
  width: 317px;
  height: 52px;
  padding-left: 5px;
  gap: 9px;
}

.order {
  width: 112px;
  height: 43px;
  flex-direction: column;
  border: 1px solid;
  border-radius: 8px;
  background-color: #fff;
  font-size: 13px;
  line-height: 18px;
}

.order b {
  font-size: 15px;
  font-weight: 600;
}

.sell {
  color: #d5284d;
}

.buy {
  color: #3a5be0;
}

.spread {
  font-size: 12px;
}

.indicator {
  width: max-content;
  height: 30px;
  padding: 0 6px;
  gap: 11px;
}

.muted {
  color: #bcbcc0;
}

.up {
  color: #a9dbaa;
}

.down {
  color: #ef8fa1;
}

.muted svg {
  margin-left: 16px;
}

.collapse {
  width: 35px;
  height: 26px;
  margin: 4px 3px;
  border: 1px solid #dcdce2;
  border-radius: 4px;
  background-color: #fff;
}

.float-tools {
  position: absolute;
  top: 36px;
  left: 340px;
  display: flex;
  align-items: center;
  width: 220px;
  height: 47px;
  padding-left: 10px;
  gap: 14px;
  border-radius: 6px;
  background-color: #fff;
  box-shadow: 0 2px 5px rgba(0, 0, 0, 0.25);
}

.float-tools svg {
  overflow: visible;
}

.float-tools text {
  font-size: 9px;
  font-weight: 600;
  text-anchor: middle;
}

/* Ranges and bottom panel */
.ranges {
  display: flex;
  align-items: center;
  height: 50px;
  padding: 0 5px 0 11px;
  border-top: 1px solid #e6e6ea;
}

.ranges button {
  height: 34px;
  padding: 0 7px;
}

.ranges .sep {
  margin: 0 9px 0 8px;
}

.panel-card {
  border-radius: 6px 6px 0 0;
  background-color: #fff;
  overflow: hidden;
}

.panel-tabs {
  display: flex;
  align-items: center;
  height: 47px;
  padding: 0 12px 2px 7px;
  gap: 14px;
}

.panel-tabs button {
  height: 42px;
  padding: 0 13px;
  border-radius: 6px;
  font-weight: 500;
}

.panel-tabs .on {
  background-color: #ebe9ec;
}

.panel-tabs .plain {
  padding: 0;
  margin-left: 10px;
}

.banner {
  position: relative;
  display: flex;
  align-items: flex-start;
  height: 36px;
  padding: 17px 0 0 80px;
  gap: 8px;
  border-top: 1px solid #dfe3ee;
  background: linear-gradient(to right, #e9effd, #f0f6ff 30%, #e8fcff 70%, #e8fcff);
  font-size: 19px;
  font-weight: 600;
  overflow: hidden;
}

.banner svg {
  margin-top: 2px;
}

.banner b {
  color: #1e8ff8;
  font-size: 21px;
  line-height: 26px;
  font-weight: 800;
}

.banner-btn {
  position: absolute;
  top: 33px;
  right: 101px;
  width: 136px;
  height: 34px;
  border-radius: 8px;
  background-color: #131316;
}

.scroll-thumb {
  position: absolute;
  top: 2px;
  right: 1px;
  width: 4px;
  height: 17px;
  border-radius: 2px;
  background-color: #8d8f96;
}

/* Taskbar */
.taskbar {
  display: grid;
  grid-template-columns: 1fr auto 1fr;
  align-items: center;
  height: 60px;
  border-top: 1px solid #a6c2c2;
  background: linear-gradient(to right, #dff3ea, #d2f6f4 25%, #d3f6f8);
  font-family: "Open Sans", sans-serif;
  font-size: 14px;
}

.weather {
  display: flex;
  align-items: center;
  padding-left: 28px;
  gap: 6px;
  line-height: 20px;
}

.weather text {
  fill: #fff;
  font-size: 14px;
  text-anchor: middle;
}

.weather span,
.clock span {
  display: block;
}

.weather span {
  color: #5a6466;
}

.apps {
  display: flex;
  align-items: center;
}

.apps button {
  position: relative;
  width: 55px;
  height: 50px;
}

.task-search {
  display: flex;
  align-items: center;
  width: 272px;
  height: 38px;
  margin: 0 4px 0 5px;
  padding: 0 3px 0 12px;
  gap: 12px;
  border: 1px solid #c3dfe2;
  border-radius: 19px;
  background-color: #f5fbff;
}

.task-search input {
  flex: 1;
  min-width: 0;
  border: 0;
  padding: 0;
  background: none;
  font: 16px "Open Sans", sans-serif;
}

.task-search input::placeholder {
  color: #4f5659;
}

.running::after {
  content: "";
  position: absolute;
  bottom: 1px;
  left: 24px;
  width: 7px;
  height: 4px;
  border-radius: 2px;
  background-color: #7b8b8c;
}

.apps .current {
  width: 47px;
  margin: 0 4px;
  border-radius: 6px;
  background-color: #eefbfd;
}

.current::after {
  left: 14px;
  width: 19px;
  background-color: #23858a;
}

.tray {
  display: flex;
  align-items: center;
  justify-content: flex-end;
  padding-right: 26px;
  gap: 22px;
}

.net {
  display: flex;
  gap: 8px;
}

.clock {
  line-height: 19px;
  text-align: right;
}

.clock + svg {
  margin-left: -12px;
}

/* Screen corners */
.corner {
  position: fixed;
  stroke: none;
  pointer-events: none;
}

.tl {
  top: 0;
  left: 0;
}

.tr {
  top: 0;
  right: 0;
}

.bl {
  bottom: 0;
  left: 0;
}

.br {
  bottom: 0;
  right: 0;
}
```

FILE: chart.js
```js
// All values are thirds of a pixel. Each block has its own vertical base,
// "start" is the bar number counted from 22 May 00:00.
// Bar: direction, high, body top, body bottom, low
const STEP = 5.104;
const ORIGIN_X = 1110.4;

const blocks = [
  { start: -201, base: 1440, bars: `g 1048 1090 1090 1090` },
  { start: -194, base: 1440, bars: `g 1072 1090 1090 1090|r 1076 1090 1090 1090|g 1045 1083 1090 1090|r 1075 1083 1090 1090|g 1080 1090 1090 1090
    g 1045 1053 1090 1090|r 1040 1053 1090 1090|g 935 983 1090 1090|g 898 952 985 985|r 925 952 990 995|r 935 995 1045 1045|r 1040 1047 1050 1090
    r 1030 1047 1090 1090|g 1050 1062 1090 1090|g 1020 1045 1065 1090|g 972 990 1045 1045|g 755 793 985 1000|g 687 715 795 830|g 455 556 715 738
    g 445 462 558 558|r 415 462 475 532|r 457 475 528 543|r 465 528 651 747|g 490 583 651 672|g 545 558 583 657|r 525 558 749 749|r 685 747 752 768
    g 735 750 752 858|g 528 583 752 775|g 525 558 583 662|g 462 465 560 600|g 352 405 467 517|g 295 297 407 438|g 240 294 297 360|r 240 294 375 443
    r 315 373 416 452|g 285 298 416 430|g -177 30 299 300|r -6 30 87 140|r 27 85 278 285|g 225 243 278 325|r 232 243 299 335|r 293 297 305 350
    r 288 303 437 497|r 425 435 448 533|r 405 447 527 527|r 505 527 570 612|g 501 501 570 618|r 501 501 621 627|g 545 573 621 738|g 395 414 576 576
    g 280 408 416 422|r 405 408 632 672|g 470 501 632 686|g 480 489 503 545|g 405 465 491 510|g 438 447 467 555|r 418 447 512 557|r 490 510 546 602
    g 473 537 545 557|r 527 537 632 696|g 588 600 632 686|r 590 600 668 696|g 574 582 668 692|r 582 582 795 903|g 680 720 795 806|g 645 706 722 728
    g 613 682 708 720|g 645 676 683 718|g 530 543 678 686|g 487 534 543 637|r 487 534 578 592|r 507 577 594 608|g 507 558 594 635` },
  { start: -120, base: 1620, bars: `r 372 378 476 476|g 418 447 476 476|g 357 414 450 482|r 327 414 497 503|g 430 430 497 505|r 422 430 485 512
    r 467 484 515 532|r 505 513 570 587|g 507 549 570 570|r 549 549 587 687|r 575 585 645 650|g 567 604 645 705|g 530 603 606 635|r 593 603 656 668
    r 645 654 711 743|r 706 708 748 790|r 716 748 785 810|g 683 709 785 828|g 642 651 711 717|r 642 651 776 800|r 758 775 819 842|g 687 744 819 825
    r 697 744 774 837|r 758 772 775 873|r 753 774 803 808|r 802 802 906 908|g 808 873 906 908|g 790 838 876 908|g 738 747 840 908|g 655 735 749 770
    g 678 682 738 765|r 672 682 691 717|r 688 690 746 756|r 742 744 801 825|g 706 723 801 833|g 513 516 725 752|g 448 478 518 557|g 393 443 480 485
    g 190 243 443 448|g 148 165 245 256` },
  { start: -80, base: 480, bars: `g 1075 1155 1307 1310|r 1120 1155 1265 1265|g 907 981 1265 1277|g 604 841 984 1037|r 720 841 861 970|r 822 857 861 1008
    g 768 861 863 905|g 747 777 863 951|g 430 501 779 867|r 415 501 629 647|g 490 564 629 629|g 252 449 567 590|g 0 0 450 518|r 0 0 278 340
    r 195 277 540 611|g 355 381 540 575|r 325 381 521 575|g 430 462 521 608|r 415 462 486 537|g 267 288 486 510|g 0 165 291 333|g 0 94 167 252
    r 15 94 420 445|r 333 420 695 860|g 500 543 695 745|r 543 543 954 968|g 727 747 954 970|g 558 609 750 765|g 517 549 611 705|g 168 252 551 567
    r 225 252 287 335|r 235 286 374 473|r 123 372 407 407|g 372 405 407 585|r 370 405 503 600|r 480 501 518 653|r 490 517 567 618|r 483 565 668 692
    r 628 666 944 960|g 783 867 944 995|r 785 867 881 1133|r 765 879 944 1028|r 897 942 966 1098|g 801 822 966 987|r 798 822 873 903|g 798 852 873 1004
    r 815 852 878 962|r 825 878 920 972|r 918 918 1077 1146|r 1053 1075 1176 1287|r 1117 1174 1196 1215|r 1188 1194 1230 1295|g 1174 1221 1229 1329
    r 1200 1220 1278 1337|g 1200 1245 1278 1329|g 1185 1194 1248 1255|g 1047 1053 1196 1200|g 952 1023 1055 1057|g 735 765 1025 1062|r 730 765 1178 1185
    g 843 876 1178 1296|r 820 876 1176 1190|r 1144 1173 1296 1355|g 1230 1284 1296 1365|g 1143 1155 1287 1383|g 1035 1083 1158 1203|g 1053 1062 1085 1134
    g 918 1035 1064 1098|r 987 1035 1140 1146|r 1117 1137 1212 1257|g 1173 1173 1212 1266|g 1110 1134 1176 1272|g 1038 1062 1137 1162|g 998 1029 1065 1145
    r 927 1029 1075 1098|r 1044 1074 1092 1144|g 936 972 1092 1128|r 804 972 1002 1203|g 858 951 1002 1068|g 798 822 954 960` },
  { start: 0, base: 780, bars: `g 458 468 524 528|g 357 459 470 498|g 366 438 461 513|r 387 438 486 503|g 339 339 486 551|g 117 201 342 422|r 170 201 404 455
    r 258 402 629 668|r 533 627 689 828|r 618 687 711 745|r 708 708 897 948|g 783 792 897 917|r 768 792 858 867|g 786 819 858 884|r 810 819 840 876
    g 807 828 840 885|r 807 828 861 909|g 820 837 861 976|g 723 810 840 852|r 810 810 902 945|r 858 900 969 1064|g 937 957 969 1031|g 798 816 960 1014
    g 747 780 818 850|g 697 704 783 783|r 690 704 810 837|r 765 807 810 890|r 792 810 903 939|g 815 846 903 921|r 815 846 870 1005|g 792 810 870 902
    g 765 801 811 825|g 727 800 802 885|r 732 800 810 816|r 770 808 822 852|r 790 820 858 880|r 846 856 906 926|g 862 877 906 966|g 825 852 878 893` }
];

// Ichimoku cloud: x / y are the corner of the block, points again in thirds
const clouds = [
  { kind: "g", x: 0, y: 480,
    a: "965,1088 980,1000 1000,950 1015,828 1045,806 1065,803 1090,775 1105,760 1122,717 1135,702 1155,722 1180,724 1187,730 1200,728 1217,690 1245,630 1295,628 1305,370 1322,355 1340,325 1353,287 1370,272 1384,238 1405,252 1430,260 1445,320 1458,328 1475,382 1490,412 1505,423 1537,423 1550,405 1568,393 1612,393 1628,381 1643,381 1658,414 1690,414 1700,442 1715,500",
    b: "1715,501 1603,501 1570,517 1412,517 1400,535 1385,553 1370,590 1352,612 1325,618 1308,640 1303,680 1292,832 1247,832 1230,895 1200,952 1047,952 1030,967 1017,973 1003,1088" },
  { kind: "r", x: 400, y: 540,
    a: "515,320 535,295 550,255 565,228 580,181 877,181 890,220 900,262 905,300 918,325 935,435 950,440 967,462 980,468 1012,469 1027,483 1045,487 1058,512 1072,516 1103,518 1118,580 1165,580 1190,588 1210,611 1240,618",
    b: "1240,620 1225,690 1207,725 1193,767 1165,758 1133,740 1118,738 1090,710 1060,706 1042,680 1028,677 1000,648 983,632 965,622 935,622 905,598 890,570 875,538 860,537 830,508 812,505 797,475 783,467 765,450 748,440 722,437 707,416 675,416 658,432 640,462 610,464 597,473 580,470 550,446 537,430 522,380 515,320" },
  { kind: "g", x: 640, y: 160,
    a: "520,1758 535,1680 550,1655 565,1550 580,1550 595,1470 610,1290 625,1243 640,1225 657,1217 675,1165 690,1060 703,1033 720,1030 735,880 750,750 763,700 777,665 797,662 812,640 827,585 857,578 873,555 890,430 900,418 908,430 918,468 933,420 978,415 993,355 1012,348 1027,425 1042,450 1058,443 1085,443 1103,395 1117,378 1133,374 1148,440 1162,453 1178,525 1195,583 1210,585 1226,612 1256,613 1272,650 1282,730",
    b: "1282,730 1272,800 1256,838 1180,840 1163,892 890,892 875,970 765,970 752,1005 735,1165 720,1232 705,1233 690,1250 675,1341 612,1341 600,1500 590,1570 578,1573 572,1610 552,1685 535,1705 520,1760" },
  { kind: "r", x: 1000, y: 260,
    a: "202,430 205,400 220,365 236,345 250,250 265,208 290,218 325,220 400,220 430,230 450,234 467,241 590,242 605,400 620,451 758,451 775,575 787,575",
    b: "785,580 775,580 770,668 727,674 712,715 690,745 668,748 653,777 605,775 590,802 560,802 543,778 528,777 515,757 468,752 450,710 437,680 405,668 390,645 372,642 345,627 330,605 290,597 268,580 238,568 220,490 205,455 202,430" },
  { kind: "g", x: 1000, y: 260,
    a: "787,575 795,540 818,497 835,535 915,540 935,560 945,598",
    b: "945,600 805,600 787,575" },
  { kind: "r", x: 1000, y: 260,
    a: "945,598 1250,598 1262,590 1293,590",
    b: "1293,862 1277,872 1250,872 1235,855 1218,825 1205,760 1190,735 1170,722 1145,735 1080,735 1068,741 1018,741 1005,705 985,697 960,650 945,598" }
];

const NS = "http://www.w3.org/2000/svg";

function add(parent, name, attrs) {
  const node = document.createElementNS(NS, name);
  for (const key in attrs) node.setAttribute(key, attrs[key]);
  parent.appendChild(node);
  return node;
}

const cloudLayer = document.getElementById("clouds");
clouds.forEach(cloud => {
  const g = add(cloudLayer, "g", { transform: `translate(${cloud.x} ${cloud.y}) scale(${1 / 3})` });
  const green = cloud.kind === "g";
  add(g, "polygon", {
    points: cloud.a + " " + cloud.b,
    fill: green ? "rgba(69, 172, 69, 0.58)" : "rgba(237, 44, 62, 0.46)",
    stroke: "none"
  });
  add(g, "polyline", { points: cloud.a, stroke: green ? "#a5d6a7" : "#f29aa5", "stroke-width": 3 });
  add(g, "polyline", { points: cloud.b, stroke: green ? "#ef9a9a" : "#b4d3ac", "stroke-width": 3 });
});

const candleLayer = document.getElementById("candles");
blocks.forEach(block => {
  block.bars.split(/[|\n]/).forEach((bar, i) => {
    const [dir, ...v] = bar.trim().split(" ");
    const [high, top, bottom, low] = v.map(n => Math.round((Number(n) + block.base) / 3));
    const x = Math.round(ORIGIN_X + (block.start + i) * STEP - 0.5);
    const fill = dir === "g" ? "#449c43" : "#de2549";
    add(candleLayer, "rect", { x: x, y: high, width: 1, height: Math.max(low - high, 1), fill: fill, stroke: "none" });
    add(candleLayer, "rect", { x: x - 2, y: top, width: 5, height: Math.max(bottom - top, 1), fill: fill, stroke: "none" });
  });
});
```
